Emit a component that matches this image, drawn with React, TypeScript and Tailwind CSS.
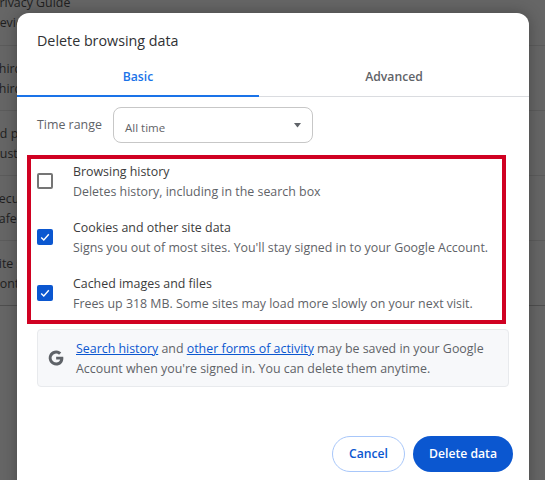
const font = "font-['Open_Sans','Noto_Sans',sans-serif]";

function CheckRow({ title, desc, checked }: { title: string; desc: string; checked?: boolean }) {
  return (
    <div className="flex h-[44px] items-center">
      <div className="w-[36px] shrink-0">
        {checked ? (
          <div className="flex h-4 w-4 items-center justify-center rounded-[2px] bg-[#0b57d0]">
            <svg width="12" height="12" viewBox="0 0 12 12" fill="none">
              <path d="M2.2 6.4 4.8 9 9.8 3.2" stroke="#fff" strokeWidth="1.4" />
            </svg>
          </div>
        ) : (
          <div className="h-4 w-4 rounded-[2px] border-2 border-[#757575]" />
        )}
      </div>
      <div className="pt-[2px] text-[12.4px] leading-[20px] text-[#3c3c3c]">
        <div className="whitespace-nowrap">{title}</div>
        <div className="whitespace-nowrap text-[#5f6368]">{desc}</div>
      </div>
    </div>
  );
}

function BackRow({ first, second, edge }: { first: string; second: string; edge?: boolean }) {
  return (
    <div className={`flex h-[65px] flex-col justify-center pt-[1px] border-b ${edge ? "border-[#4f4f4f]" : "border-[#5c5c5c]"}`}>
      <div>{first}</div>
      <div>{second}</div>
    </div>
  );
}

export default function App() {
  return (
    <div className={`relative h-[480px] w-[545px] overflow-hidden bg-[#666666] ${font}`}>
      {/* page behind the dialog */}
      <div className="-ml-[8px] text-[12.4px] leading-[20px] text-[#1f1f1f]">
        <div className="flex h-[46px] flex-col justify-end border-b border-[#5c5c5c] pb-[12px]">
          <div>Privacy Guide</div>
          <div>Review</div>
        </div>
        <BackRow first="Third" second="Third" />
        <BackRow first="Ad p" second="Custo" />
        <BackRow first="Secu" second="Safe" />
        <BackRow first="Site s" second="Cont" edge />
      </div>

      {/* dialog */}
      <div className="absolute left-[17px] top-[13px] h-[480px] w-[512px] rounded-t-[12px] bg-white shadow-[0_0_16px_rgba(0,0,0,0.3)]">
        <h1 className="pl-[20px] pt-[16px] text-[14.3px] leading-[24px] text-[#303134]">Delete browsing data</h1>
        <div className="mt-[11px] flex h-[33px] border-b border-[#dadce0] text-[12.2px] font-semibold">
          <div className="-mb-px flex w-[242px] items-center justify-center border-b-2 border-[#1a73e8] pb-[5px] text-[#1a73e8]">Basic</div>
          <div className="flex flex-1 items-center justify-center pb-[5px] text-[#5f6368]">Advanced</div>
        </div>
        <div className="mt-[10px] flex items-center pl-[20px]">
          <span className="w-[64px] whitespace-nowrap pt-[1px] text-[12.4px] text-[#5f6368]">Time range</span>
          <div className="ml-[12px] flex h-[36px] w-[200px] items-center justify-between rounded-[8px] border border-[#c7c7c7] pl-[11px] pr-[10px] text-[11.5px] text-[#5f6368]">
            <span className="pt-[5px]">All time</span>
            <svg width="8" height="5" viewBox="0 0 8 5">
              <path d="M0 0h7L3.5 4.5z" fill="#5f6368" />
            </svg>
          </div>
        </div>
        <div className="ml-[10px] mt-[12px] h-[169px] w-[479px] border-[4px] border-[#d00122] pl-[6px]">
          <div className="flex flex-col gap-[12px]">
            <CheckRow title="Browsing history" desc="Deletes history, including in the search box" />
            <CheckRow checked title="Cookies and other site data" desc="Signs you out of most sites. You'll stay signed in to your Google Account." />
            <CheckRow checked title="Cached images and files" desc="Frees up 318 MB. Some sites may load more slowly on your next visit." />
          </div>
        </div>
        <div className="ml-[20px] mt-[5px] flex h-[58px] w-[472px] items-center rounded-[4px] border border-[#e8eaed] bg-[#f7f8fa] pl-[9px]">
          <svg width="18" height="18" viewBox="0 0 24 24" className="shrink-0">
            <path
              fill="#5f6368"
              d="M12.2 10.2v3.9h5.4c-.5 2.500-2.700 3.900-5.400 3.900a6 6 0 1 1 3.900-10.500l2.900-2.900A10 10 0 1 0 12.200 22c5.800 0 9.600-4.100 9.600-9.800 0-.7-.1-1.400-.2-2z"
            />
          </svg>
          <div className="ml-[11px] pt-[2px] text-[12.4px] leading-[20px] text-[#5f6368]">
            <div className="whitespace-nowrap">
              <a className="text-[#0b57d0] underline">Search history</a> and{" "}
              <a className="text-[#0b57d0] underline">other forms of activity</a> may be saved in your Google
            </div>
            <div className="whitespace-nowrap">Account when you're signed in. You can delete them anytime.</div>
          </div>
        </div>
        <div className="mr-[16px] mt-[49px] flex justify-end gap-[8px] text-[12.2px] font-semibold">
          <button className="h-[36px] w-[73px] rounded-full border border-[#a8c7fa] text-[#0b57d0]">Cancel</button>
          <button className="h-[36px] w-[100px] rounded-full bg-[#0b57d0] text-white">Delete data</button>
        </div>
      </div>
    </div>
  );
}
